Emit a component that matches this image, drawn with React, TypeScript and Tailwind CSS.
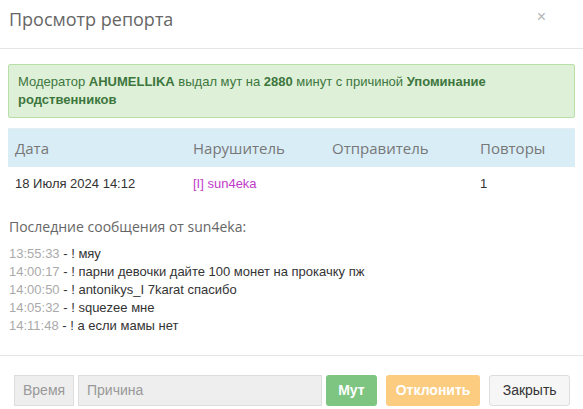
const MESSAGES = [
  { time: "13:55:33", text: "! мяу" },
  { time: "14:00:17", text: "! парни девочки дайте 100 монет на прокачку пж" },
  { time: "14:00:50", text: "! antonikys_I 7karat спасибо" },
  { time: "14:05:32", text: "! squezee мне" },
  { time: "14:11:48", text: "! а если мамы нет" },
];

const sans = "font-['Open_Sans',sans-serif]";
const arial = "font-['Liberation_Sans',Arial,sans-serif]";

export default function App() {
  return (
    <div className="h-[409px] w-[583px] overflow-hidden bg-white">
      {/* Header */}
      <div className="flex h-[49px] items-start justify-between border-b border-[#e5e5e5] pl-[9px] pr-[37px] pt-[6px]">
        <h2 className={`${sans} text-[18px] leading-[26px] text-[#666]`}>Просмотр репорта</h2>
        <button type="button" className={`${arial} mt-[2px] text-[16px] leading-[18px] text-[#b5b5b5]`} aria-label="Закрыть">
          ×
        </button>
      </div>

      {/* Body */}
      <div className="px-[8px] pt-[15px]">
        <p className={`${arial} rounded-[2px] border border-[#b9dfa9] bg-[#dff0d8] px-[9px] py-[8px] text-[13px] leading-[18px] text-[#3c763d]`}>
          <span>Модератор </span>
          <b>AHUMELLIKA</b>
          <span> выдал мут на </span>
          <b>2880</b>
          <span> минут с причиной </span>
          <b>Упоминание</b> <b>родственников</b>
        </p>

        <table className="mt-[10px] w-full border-collapse">
          <thead>
            <tr className={`${sans} h-[38px] border-t border-[#e3eef4] bg-[#d9edf7] text-left text-[15px] font-normal text-[#777]`}>
              <th className="w-[185px] pl-[7px] font-normal">Дата</th>
              <th className="w-[139px] font-normal">Нарушитель</th>
              <th className="w-[148px] font-normal">Отправитель</th>
              <th className="font-normal">Повторы</th>
            </tr>
          </thead>
          <tbody>
            <tr className={`${arial} h-[34px] text-[13px] text-[#333]`}>
              <td className="pl-[7px]">18 Июля 2024 14:12</td>
              <td className="text-[#c03cc8]">[I] sun4eka</td>
              <td></td>
              <td>1</td>
            </tr>
          </tbody>
        </table>

        <p className={`${sans} mt-[16px] pl-[1px] text-[14px] leading-[20px] text-[#666]`}>Последние сообщения от sun4eka:</p>

        <div className={`${arial} mt-[8px] pl-[1px] text-[13px] leading-[18px]`}>
          {MESSAGES.map((m) => (
            <div key={m.time}>
              <span className="text-[#aaa]">{m.time}</span>
              <span className="text-[#333]"> - {m.text}</span>
            </div>
          ))}
        </div>
      </div>

      {/* Footer */}
      <div className={`${arial} mt-[20px] flex items-center border-t border-[#e5e5e5] pl-[14px] pr-[13px] pt-[19px] text-[14px]`}>
        <input
          placeholder="Время"
          className="h-[31px] w-[60px] border border-[#ddd] bg-[#eee] px-[8px] text-[#555] placeholder:text-[#999] outline-none"
        />
        <input
          placeholder="Причина"
          className="ml-[4px] h-[31px] w-[245px] border border-[#ddd] bg-[#eee] px-[8px] text-[#555] placeholder:text-[#999] outline-none"
        />
        <button type="button" className="ml-[4px] h-[31px] w-[51px] rounded-[3px] bg-[#7dc580] font-bold text-white">
          Мут
        </button>
        <button type="button" className="ml-[9px] h-[31px] w-[95px] rounded-[3px] bg-[#fccc80] font-bold text-white">
          Отклонить
        </button>
        <button type="button" className="ml-[9px] h-[31px] w-[81px] rounded-[3px] border border-[#ddd] bg-[#f6f6f6] text-[#333]">
          Закрыть
        </button>
      </div>
    </div>
  );
}
